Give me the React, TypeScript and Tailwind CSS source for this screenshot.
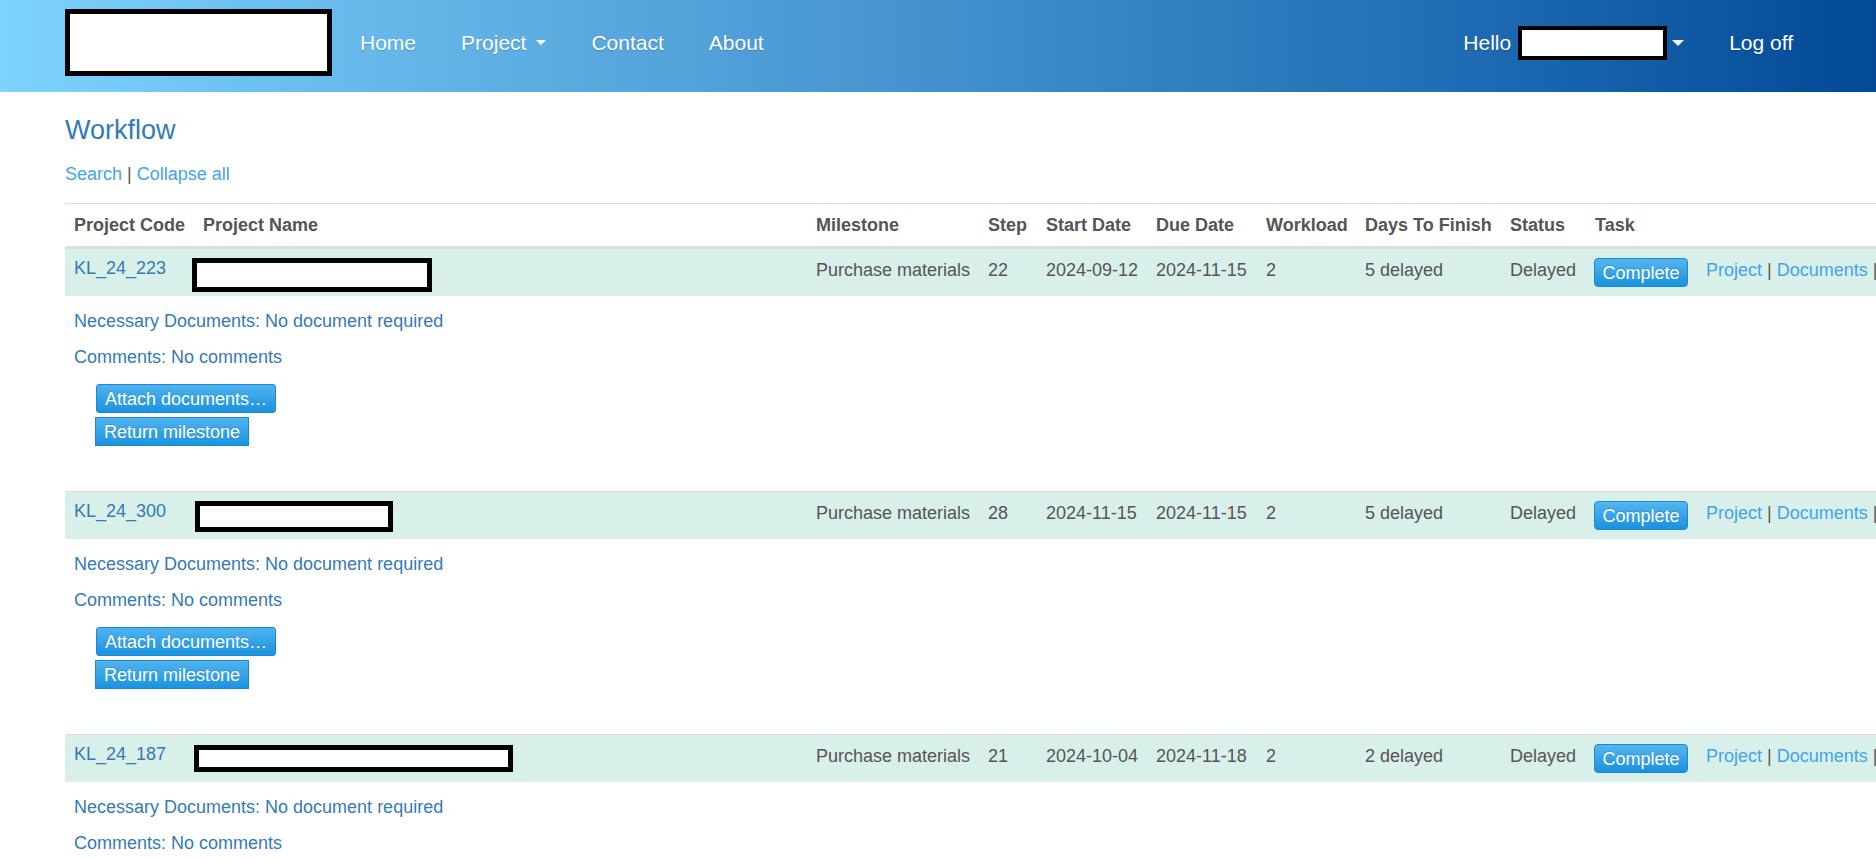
const rows = [
  {
    code: "KL_24_223",
    box: "ml-[-2px] mt-[9px] w-[240px] h-[34px]",
    step: "22",
    start: "2024-09-12",
    due: "2024-11-15",
    workload: "2",
    days: "5 delayed",
  },
  {
    code: "KL_24_300",
    box: "ml-[1px] mt-[9px] w-[198px] h-[31px]",
    step: "28",
    start: "2024-11-15",
    due: "2024-11-15",
    workload: "2",
    days: "5 delayed",
  },
  {
    code: "KL_24_187",
    box: "ml-0 mt-[10px] w-[319px] h-[27px]",
    step: "21",
    start: "2024-10-04",
    due: "2024-11-18",
    workload: "2",
    days: "2 delayed",
  },
];

const cols =
  "grid grid-cols-[129px_613px_172px_58px_110px_110px_99px_145px_85px_111px_1fr]";

const headers = [
  "Project Code",
  "Project Name",
  "Milestone",
  "Step",
  "Start Date",
  "Due Date",
  "Workload",
  "Days To Finish",
  "Status",
  "Task",
  "",
];

function Caret({ size }: { size: "sm" | "md" }) {
  return size === "sm" ? (
    <span className="inline-block h-0 w-0 border-x-[5px] border-t-[5px] border-x-transparent border-t-white" />
  ) : (
    <span className="inline-block h-0 w-0 border-x-[6px] border-t-[6px] border-x-transparent border-t-white" />
  );
}

function Navbar() {
  return (
    <nav className="flex h-[92px] items-center bg-[linear-gradient(to_right,#7cd3fd,#4a97d2_45%,#1e6cb3_78%,#034996)] pb-[7px] pl-[65px] pr-[83px] text-[21px] text-white [text-shadow:0_1px_1px_rgba(0,0,0,0.2)]">
      <div className="h-[67px] w-[267px] border-[5px] border-black bg-white" />
      <ul className="ml-[28px] flex items-center gap-[45px]">
        <li>Home</li>
        <li className="flex items-center gap-[10px]">
          Project <Caret size="sm" />
        </li>
        <li>Contact</li>
        <li>About</li>
      </ul>
      <div className="ml-auto flex items-center">
        <span>Hello</span>
        <div className="ml-[7px] h-[34px] w-[149px] border-[4px] border-black bg-white" />
        <span className="ml-[5px] flex items-center">
          <Caret size="md" />
        </span>
        <span className="ml-[45px]">Log off</span>
      </div>
    </nav>
  );
}

function BlueButton({ children, rounded }: { children: string; rounded: boolean }) {
  return (
    <button
      className={
        "flex h-[29px] items-center border border-[#1b8ad4] bg-[linear-gradient(#4fb3ef,#1b93df)] px-[8px] text-[18px] text-white [text-shadow:0_-1px_0_rgba(0,0,0,0.15)] " +
        (rounded ? "rounded-[3px]" : "rounded-none")
      }
    >
      {children}
    </button>
  );
}

export default function App() {
  return (
    <div className="h-screen w-full overflow-hidden bg-white font-['Liberation_Sans',Arial,sans-serif] text-[18px] leading-[26px] text-[#555]">
      <Navbar />

      <main className="w-[2000px] px-[65px]">
        <h3 className="mt-[23px] h-[30px] text-[27px] leading-[30px] text-[#337ab7]">Workflow</h3>
        <p className="mt-[16px] h-[26px]">
          <a className="text-[#42a3ec]">Search</a> <span className="text-[#555]">|</span>{" "}
          <a className="text-[#42a3ec]">Collapse all</a>
        </p>

        <div className="mt-[16px] border-t border-[#ddd]">
          <div className={cols + " border-b-2 border-[#ddd] py-[8px] font-bold"}>
            {headers.map((h, i) => (
              <div key={i} className="whitespace-nowrap px-[9px]">
                {h}
              </div>
            ))}
          </div>

          {rows.map((r) => (
            <div key={r.code}>
              <div className={cols + " h-[48px] items-start whitespace-nowrap border-t border-[#ddd] bg-[#d9f0ea]"}>
                <div className="px-[9px] pt-[6px] text-[#337ab7]">{r.code}</div>
                <div>
                  <div className={"border-[5px] border-black bg-white " + r.box} />
                </div>
                <div className="px-[9px] pt-[8px]">Purchase materials</div>
                <div className="px-[9px] pt-[8px]">{r.step}</div>
                <div className="px-[9px] pt-[8px]">{r.start}</div>
                <div className="px-[9px] pt-[8px]">{r.due}</div>
                <div className="px-[9px] pt-[8px]">{r.workload}</div>
                <div className="px-[9px] pt-[8px]">{r.days}</div>
                <div className="px-[9px] pt-[8px]">Delayed</div>
                <div className="px-[8px] pt-[9px]">
                  <button className="flex h-[29px] w-[94px] items-center justify-center rounded-[4px] border border-[#1b8ad4] bg-[linear-gradient(#55b6f0,#1a91de)] text-[18px] text-white [text-shadow:0_-1px_0_rgba(0,0,0,0.15)]">
                    Complete
                  </button>
                </div>
                <div className="px-[9px] pt-[8px]">
                  <a className="text-[#42a3ec]">Project</a> | <a className="text-[#42a3ec]">Documents</a> |
                </div>
              </div>

              <div className="flex h-[195px] flex-col items-start px-[9px] pt-[12px] text-[#337ab7]">
                <p>Necessary Documents: No document required</p>
                <p className="mt-[10px]">Comments: No comments</p>
                <div className="ml-[22px] mt-[14px]">
                  <BlueButton rounded>Attach documents…</BlueButton>
                </div>
                <div className="ml-[21px] mt-[4px]">
                  <BlueButton rounded={false}>Return milestone</BlueButton>
                </div>
              </div>
            </div>
          ))}
        </div>
      </main>
    </div>
  );
}
